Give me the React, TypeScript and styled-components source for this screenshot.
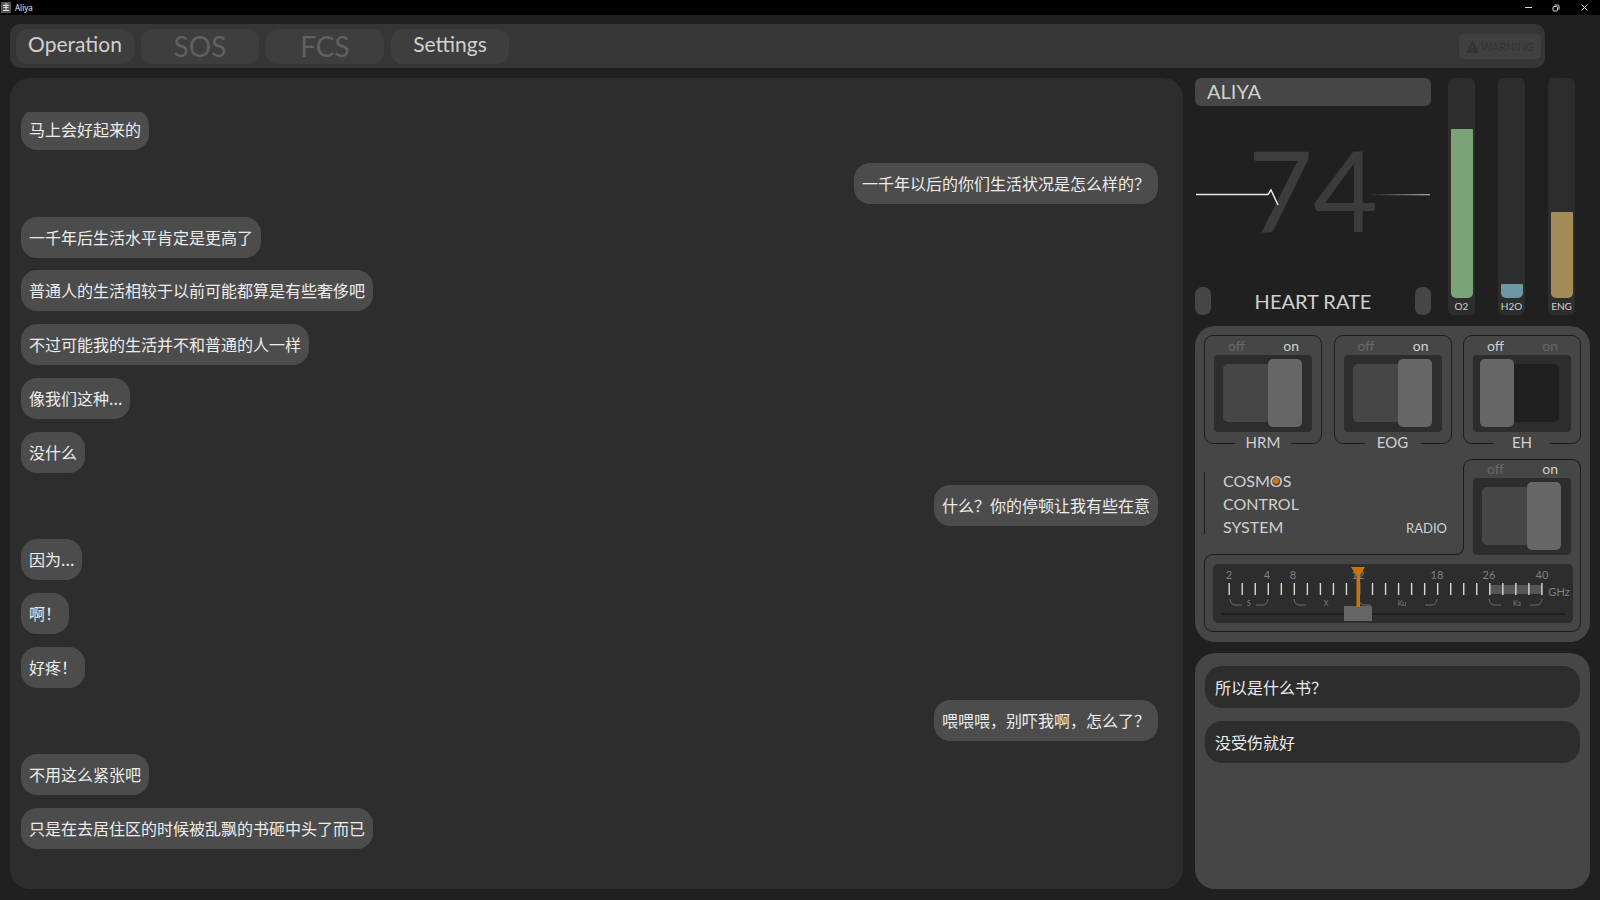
import React, { useState } from "react";
import styled, { createGlobalStyle } from "styled-components";

const latin = `"Gill Sans", "Gill Sans MT", Lato, "Noto Sans CJK SC", sans-serif`;
const cjk = `"Noto Sans CJK SC", "Noto Sans", sans-serif`;

const c = {
  page: "#202020",
  bar: "#363636",
  tab: "#3e3e3e",
  panel: "#2d2d2d",
  bubble: "#4c4c4c",
  raised: "#464646",
  knob: "#666666",
  line: "#1c1c1c",
  text: "#d0d0d0",
  dim: "#666666",
  orange: "#c8750f",
};

const Global = createGlobalStyle`
  *, *::before, *::after { box-sizing: border-box; }
  body { margin: 0; background: ${c.page}; color: ${c.text}; font-family: ${latin}; }
  button, input { font: inherit; margin: 0; }
`;

const Page = styled.div`
  display: flex;
  flex-direction: column;
  min-height: 100vh;
`;

/* Window title bar */
const TitleBar = styled.header`
  display: flex;
  align-items: center;
  justify-content: space-between;
  height: 15px;
  padding: 0 9px 0 1px;
  background: #000;
`;
const WindowName = styled.div`
  display: flex;
  align-items: center;
  gap: 4px;
  font: 8px/14px "Noto Sans", sans-serif;
  color: #eee;
`;
const WindowButtons = styled.div`
  display: flex;
  gap: 14px;
`;
const WindowButton = styled.button`
  display: grid;
  place-items: center;
  width: 14px;
  height: 13px;
  padding: 0;
  border: 0;
  background: none;
  color: #ddd;
`;

/* Navigation */
const Nav = styled.nav`
  display: flex;
  align-items: center;
  gap: 7px;
  height: 44px;
  margin: 9px 55px 10px 10px;
  padding: 0 4px 0 6px;
  border-radius: 10px;
  background: ${c.bar};
`;
const Tab = styled.button`
  width: 118px;
  height: 35px;
  padding: 0 0 4px;
  border: 0;
  border-radius: 12px;
  background: ${c.tab};
  color: ${c.text};
  font-size: 21px;
  line-height: 30px;
  &:disabled {
    padding: 0;
    color: #606060;
    font-size: 28px;
  }
`;
const Warning = styled.button`
  display: flex;
  align-items: center;
  justify-content: center;
  gap: 2px;
  width: 82px;
  height: 25px;
  margin-left: auto;
  padding: 0;
  border: 0;
  border-radius: 5px;
  background: #404040;
  color: #343434;
  font-size: 11px;
`;

/* Main area */
const Main = styled.main`
  display: grid;
  grid-template-columns: minmax(0, 1fr) 395px;
  gap: 12px;
  flex: 1;
  padding: 0 10px 11px;
`;
const Chat = styled.section`
  display: flex;
  padding: 34px 25px 40px 11px;
  border-radius: 20px;
  background: ${c.panel};
`;
const ChatViewport = styled.div`
  display: flex;
  flex: 1;
  overflow: hidden;
`;
const Messages = styled.ol`
  display: flex;
  flex: 1;
  flex-direction: column;
  justify-content: space-between;
  margin: -3px 0 0;
  padding: 0;
  list-style: none;
`;
const Message = styled.li<{ $mine?: boolean }>`
  align-self: ${(p) => (p.$mine ? "flex-end" : "flex-start")};
  padding: 8px 8px 9px;
  border-radius: 16px;
  background: ${c.bubble};
  color: #ececec;
  font: 16px/24px ${cjk};
`;

const Side = styled.aside`
  display: flex;
  flex-direction: column;
  gap: 11px;
`;

/* Vital signs */
const Vitals = styled.section`
  display: flex;
  gap: 17px;
  height: 237px;
`;
const Monitor = styled.div`
  display: flex;
  flex-direction: column;
  width: 236px;
`;
const PatientName = styled.h2`
  height: 28px;
  margin: 0;
  padding: 0 12px;
  border-radius: 6px;
  background: ${c.raised};
  font-size: 20px;
  font-weight: 400;
  line-height: 27px;
`;
const Pulse = styled.div`
  position: relative;
  display: grid;
  place-items: center;
  flex: 1;
  padding-bottom: 16px;
`;
const Rate = styled.output`
  color: #3c3c3c;
  font-size: 112px;
  line-height: 120px;
`;
const Trace = styled.svg`
  position: absolute;
  top: 76px;
  left: 0;
  width: 100%;
  height: 26px;
`;
const MonitorFoot = styled.div`
  display: flex;
  align-items: center;
  justify-content: space-between;
  height: 28px;
  font-size: 20px;
`;
const Pill = styled.span`
  width: 16px;
  height: 28px;
  border-radius: 7px;
  background: ${c.raised};
`;
const Gauges = styled.div`
  display: flex;
  gap: 23px;
`;
const Gauge = styled.div`
  display: flex;
  flex-direction: column;
  align-items: center;
  justify-content: flex-end;
  width: 27px;
  border-radius: 6px;
  background: ${c.panel};
  font-size: 10px;
  line-height: 17px;
`;
const GaugeFill = styled.div<{ $color: string }>`
  width: 22px;
  border-radius: 1px 1px 5px 5px;
  background: ${(p) => p.$color};
`;

/* Control system */
const Controls = styled.section`
  display: flex;
  flex-direction: column;
  height: 316px;
  padding: 9px 9px 10px;
  border-radius: 20px;
  background: ${c.raised};
`;
const SwitchRow = styled.div`
  display: flex;
  justify-content: space-between;
`;
const SwitchFrame = styled.label`
  position: relative;
  display: flex;
  flex-direction: column;
  align-items: center;
  width: 118px;
  height: 109px;
  border: 1px solid ${c.line};
  border-radius: 9px;
`;
const SwitchName = styled.span`
  position: absolute;
  bottom: -8px;
  width: 56px;
  background: ${c.raised};
  font-size: 15px;
  line-height: 18px;
  text-align: center;
`;
const States = styled.span`
  display: flex;
  justify-content: space-between;
  width: 98px;
  padding: 0 13px 0 14px;
  font-size: 14px;
  line-height: 19px;
`;
const State = styled.span<{ $lit: boolean }>`
  color: ${(p) => (p.$lit ? c.text : c.dim)};
`;
const Toggle = styled.input`
  position: relative;
  width: 98px;
  height: 77px;
  appearance: none;
  border-radius: 4px;
  background: ${c.panel};
  &::before,
  &::after {
    content: "";
    position: absolute;
    border-radius: 5px;
  }
  &::before {
    inset: 9px 12px 10px 9px;
    background: ${c.page};
  }
  &::after {
    top: 4px;
    left: 7px;
    width: 34px;
    height: 68px;
    background: ${c.knob};
  }
  &:checked::before {
    background: ${c.raised};
  }
  &:checked::after {
    left: 54px;
  }
`;
const SystemRow = styled.div`
  display: flex;
  flex: 1;
  margin-top: 15px;
`;
const SystemCell = styled.div`
  position: relative;
  display: flex;
  flex: 1;
  align-items: flex-end;
  justify-content: space-between;
  margin-bottom: 9px;
  padding: 0 17px 17px 0;
  &::after {
    content: "";
    position: absolute;
    inset: 50% 0 0 9px;
    border: solid ${c.line};
    border-width: 0 1px 1px 0;
    border-bottom-right-radius: 8px;
  }
`;
const SystemName = styled.h2`
  display: flex;
  flex-direction: column;
  justify-content: center;
  height: 62px;
  margin: 0 0 4px;
  padding-left: 18px;
  border-left: 1px solid ${c.line};
  font-size: 16px;
  font-weight: 400;
  line-height: 23px;
`;
const DottedLetter = styled.span`
  position: relative;
  &::after {
    content: "";
    position: absolute;
    top: 50%;
    left: 50%;
    width: 6px;
    height: 6px;
    margin: -2px 0 0 -3px;
    border-radius: 50%;
    background: ${c.orange};
  }
`;
const RadioName = styled.label`
  font-size: 13px;
  line-height: 20px;
`;
const RadioCell = styled.div`
  position: relative;
  display: flex;
  flex-direction: column;
  align-items: center;
  width: 117px;
  border-right: 1px solid ${c.line};
  border-top-right-radius: 9px;
  &::before {
    content: "";
    position: absolute;
    inset: 0 -1px 50% -1px;
    border: 1px solid ${c.line};
    border-bottom: 0;
    border-radius: 9px 9px 0 0;
  }
`;
const TunerFrame = styled.div`
  position: relative;
  padding: 0 7px 8px 8px;
  border: 1px solid ${c.line};
  border-top: 0;
  border-radius: 0 0 9px 9px;
  &::before {
    content: "";
    position: absolute;
    top: -10px;
    left: -1px;
    width: 10px;
    height: 10px;
    border: solid ${c.line};
    border-width: 1px 0 0 1px;
    border-top-left-radius: 9px;
  }
`;
const Tuner = styled.div`
  position: relative;
  height: 59px;
  border-radius: 5px;
  background: ${c.panel};
`;
const Scale = styled.svg`
  position: relative;
  display: block;
  width: 360px;
  height: 42px;
  overflow: visible;
  z-index: 1;
  pointer-events: none;
  font-family: ${latin};
`;
const Dial = styled.input`
  display: block;
  width: 344px;
  height: 15px;
  margin-left: 8px;
  appearance: none;
  background: linear-gradient(${c.page}, ${c.page}) center / 100% 2px no-repeat;
  &::-webkit-slider-thumb {
    width: 28px;
    height: 15px;
    appearance: none;
    background: ${c.knob};
  }
`;

/* Replies */
const Replies = styled.section`
  display: flex;
  flex: 1;
  flex-direction: column;
  gap: 13px;
  padding: 13px 10px;
  border-radius: 20px;
  background: ${c.raised};
`;
const Reply = styled.button`
  height: 42px;
  padding: 0 10px;
  border: 0;
  border-radius: 17px;
  background: ${c.panel};
  color: #ececec;
  font: 16px/24px ${cjk};
  text-align: left;
`;

const messages: { text: string; mine?: boolean }[] = [
  { text: "马上会好起来的" },
  { text: "一千年以后的你们生活状况是怎么样的？", mine: true },
  { text: "一千年后生活水平肯定是更高了" },
  { text: "普通人的生活相较于以前可能都算是有些奢侈吧" },
  { text: "不过可能我的生活并不和普通的人一样" },
  { text: "像我们这种..." },
  { text: "没什么" },
  { text: "什么？你的停顿让我有些在意", mine: true },
  { text: "因为..." },
  { text: "啊！" },
  { text: "好疼！" },
  { text: "喂喂喂，别吓我啊，怎么了？", mine: true },
  { text: "不用这么紧张吧" },
  { text: "只是在去居住区的时候被乱飘的书砸中头了而已" },
];

const gauges = [
  { name: "O2", level: 169, color: "#7aa378" },
  { name: "H2O", level: 14, color: "#6d97a3" },
  { name: "ENG", level: 86, color: "#a38c58" },
];

const marks: [string, number][] = [
  ["2", 16], ["4", 54], ["8", 80], ["12", 145], ["18", 224], ["26", 276], ["40", 329],
];
const bands: [string, number, number, number][] = [
  ["S", 17, 36, 55], ["X", 81, 113, 146], ["Ku", 146, 189, 224], ["Ka", 276, 304, 329],
];

function Switch({ name, initial }: { name: string; initial: boolean }) {
  const [on, setOn] = useState(initial);
  return (
    <SwitchFrame>
      <States>
        <State $lit={!on}>off</State>
        <State $lit={on}>on</State>
      </States>
      <Toggle type="checkbox" checked={on} onChange={() => setOn(!on)} />
      <SwitchName>{name}</SwitchName>
    </SwitchFrame>
  );
}

function FrequencyScale() {
  return (
    <Scale viewBox="0 0 360 42" aria-hidden="true">
      <rect x="276" y="21" width="53" height="9" fill="#555" />
      {Array.from({ length: 25 }, (_, i) => (
        <rect key={i} x={15.5 + i * 13.03} y="19" width="1.4" height="12" fill="#d8d8d8" />
      ))}
      {marks.map(([label, x]) => (
        <text key={label} x={x} y="15" fontSize="11" fill="#808080" textAnchor="middle">{label}</text>
      ))}
      {bands.map(([label, a, m, b]) => (
        <g key={label} fill="none" stroke="#6c6c6c">
          <path d={`M${a} 35q1 6 5 6h7`} />
          {label !== "X" && <path d={`M${b} 35q-1 6 -5 6h-7`} />}
          <text x={m} y="42" fontSize="7" fill="#808080" stroke="none" textAnchor="middle">{label}</text>
        </g>
      ))}
      <text x="346" y="32" textAnchor="middle" fontSize="11" fill="#808080">GHz</text>
      <path d="M138 3h14l-5 9v31h-3.500v-31z" fill={c.orange} />
    </Scale>
  );
}

export default function App() {
  const [radio, setRadio] = useState(true);
  const [frequency, setFrequency] = useState(388);
  return (
    <Page>
      <Global />
      <TitleBar>
        <WindowName>
          <svg width="10" height="11" viewBox="0 0 10 11" fill="none" stroke="#ddd" aria-hidden="true">
            <rect width="10" height="11" fill="#555" stroke="none" />
            <path d="M2 3.500h6M3.500 2h3M2.500 5.500h5M5 3v5M2 8.500h6" />
          </svg>
          Aliya
        </WindowName>
        <WindowButtons>
          <WindowButton aria-label="Minimize">
            <svg width="7" height="7" stroke="currentColor"><path d="M0 3.500h7" /></svg>
          </WindowButton>
          <WindowButton aria-label="Restore">
            <svg width="8" height="8" fill="none" stroke="currentColor">
              <rect x="1" y="2.500" width="4.500" height="4.500" rx="1" />
              <path d="M2.500 1h3.500q1 0 1 1v3.500" />
            </svg>
          </WindowButton>
          <WindowButton aria-label="Close">
            <svg width="7" height="7" stroke="currentColor"><path d="M.5 .5l6 6M6.500 .5l-6 6" /></svg>
          </WindowButton>
        </WindowButtons>
      </TitleBar>

      <Nav>
        <Tab>Operation</Tab>
        <Tab disabled>SOS</Tab>
        <Tab disabled>FCS</Tab>
        <Tab>Settings</Tab>
        <Warning disabled>
          <svg width="13" height="13" viewBox="0 0 13 13" aria-hidden="true">
            <path d="M6.500 0L13 13H0z" fill="#333" />
            <path d="M6.500 4.500v4M6.500 10v1.500" stroke="#404040" strokeWidth="1.300" />
          </svg>
          WARNING
        </Warning>
      </Nav>

      <Main>
        <Chat>
          <ChatViewport>
            <Messages>
              {messages.map((m) => (
                <Message key={m.text} $mine={m.mine}>{m.text}</Message>
              ))}
            </Messages>
          </ChatViewport>
        </Chat>

        <Side>
          <Vitals>
            <Monitor>
              <PatientName>ALIYA</PatientName>
              <Pulse>
                <Rate>74</Rate>
                <Trace viewBox="0 0 236 26" fill="none" aria-hidden="true">
                  <defs>
                    <linearGradient id="fade" gradientUnits="userSpaceOnUse" x1="172" x2="236" y1="0" y2="0">
                      <stop offset="0" stopColor="#999" stopOpacity="0" />
                      <stop offset="1" stopColor="#aaa" />
                    </linearGradient>
                  </defs>
                  <path d="M1 12.500H73L76 8L83 23" stroke="#e8e8e8" strokeWidth="1.500" />
                  <rect x="172" y="12" width="63" height="1.300" fill="url(#fade)" />
                </Trace>
              </Pulse>
              <MonitorFoot>
                <Pill />
                HEART RATE
                <Pill />
              </MonitorFoot>
            </Monitor>
            <Gauges>
              {gauges.map((g) => (
                <Gauge key={g.name}>
                  <GaugeFill $color={g.color} style={{ height: g.level }} />
                  {g.name}
                </Gauge>
              ))}
            </Gauges>
          </Vitals>

          <Controls>
            <SwitchRow>
              <Switch name="HRM" initial />
              <Switch name="EOG" initial />
              <Switch name="EH" initial={false} />
            </SwitchRow>
            <SystemRow>
              <SystemCell>
                <SystemName>
                  <span>COSM<DottedLetter>O</DottedLetter>S</span>
                  <span>CONTROL</span>
                  <span>SYSTEM</span>
                </SystemName>
                <RadioName htmlFor="radio">RADIO</RadioName>
              </SystemCell>
              <RadioCell>
                <States>
                  <State $lit={!radio}>off</State>
                  <State $lit={radio}>on</State>
                </States>
                <Toggle id="radio" type="checkbox" checked={radio} onChange={() => setRadio(!radio)} />
              </RadioCell>
            </SystemRow>
            <TunerFrame>
              <Tuner>
                <FrequencyScale />
                <Dial
                  type="range"
                  aria-label="Frequency"
                  min={0}
                  max={1000}
                  value={frequency}
                  onChange={(e) => setFrequency(Number(e.target.value))}
                />
              </Tuner>
            </TunerFrame>
          </Controls>

          <Replies>
            <Reply>所以是什么书？</Reply>
            <Reply>没受伤就好</Reply>
          </Replies>
        </Side>
      </Main>
    </Page>
  );
}
